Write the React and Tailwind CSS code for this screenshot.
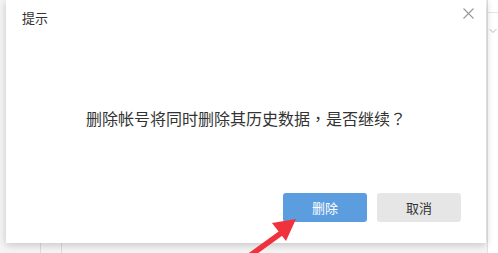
import React from "react";

const punct = { fontFamily: '"Noto Sans CJK TC", sans-serif' };

const App = () => {
  return (
    <div
      className="relative h-[253px] w-[498px] overflow-hidden bg-[#f5f5f5]"
      style={{ fontFamily: '"Noto Sans CJK SC", "Liberation Sans", sans-serif' }}
    >
      {/* page behind the dialog */}
      <div className="flex h-full">
        <div className="w-[41px] border-r border-[#dcdcdc]" />
        <div className="w-[21px] border-r border-[#dcdcdc]" />
        <div className="flex-1" />
        <div className="flex w-[11px] flex-col border-l border-[#e2e2e2] bg-white">
          <div className="h-[13px] border-b border-[#e4e4e4]" />
          <div className="mt-[15px] flex justify-center text-[#b8b8b8]">
            <svg width="8" height="6" viewBox="0 0 8 6" fill="none" stroke="currentColor" strokeWidth="1">
              <path d="M0.5 1 L4 4.5 L7.5 1" />
            </svg>
          </div>
        </div>
      </div>

      {/* dialog */}
      <div className="absolute left-[6px] top-0 flex h-[243px] w-[480px] flex-col bg-white shadow-[0_2px_8px_rgba(0,0,0,0.2)]">
        <div className="flex items-start justify-between pl-4 pr-3 pt-[9px]">
          <span className="text-[13px] leading-[18px] text-[#333]">提示</span>
          <button type="button" className="mt-[-1px] text-[#999]" aria-label="关闭">
            <svg width="11" height="11" viewBox="0 0 11 11" fill="none" stroke="currentColor" strokeWidth="1.1">
              <path d="M0.5 0.5 L10.5 10.5 M10.5 0.5 L0.5 10.5" />
            </svg>
          </button>
        </div>
        <div className="flex flex-1 items-center justify-center pt-[16px]">
          <p className="text-[16px] leading-[22px] text-[#333]">
            删除帐号将同时删除其历史数据<span style={punct}>，</span>是否继续<span style={punct}>？</span>
          </p>
        </div>
        <div className="flex justify-end gap-[10px] pb-[21px] pr-[25px]">
          <button
            type="button"
            className="h-[29px] w-[84px] rounded-[3px] bg-[#5c9de0] text-[13px] text-white"
          >
            删除
          </button>
          <button
            type="button"
            className="h-[29px] w-[84px] rounded-[3px] bg-[#e6e6e6] text-[13px] text-[#333]"
          >
            取消
          </button>
        </div>
      </div>

      {/* red annotation arrow */}
      <svg
        className="absolute left-[240px] top-[210px]"
        width="70"
        height="43"
        viewBox="0 0 70 43"
      >
        <path d="M8 47 L44 21" stroke="#f0323c" strokeWidth="5.5" strokeLinecap="round" />
        <polygon points="56,9 32,13 46,31" fill="#f0323c" />
      </svg>
    </div>
  );
};

export default App;
